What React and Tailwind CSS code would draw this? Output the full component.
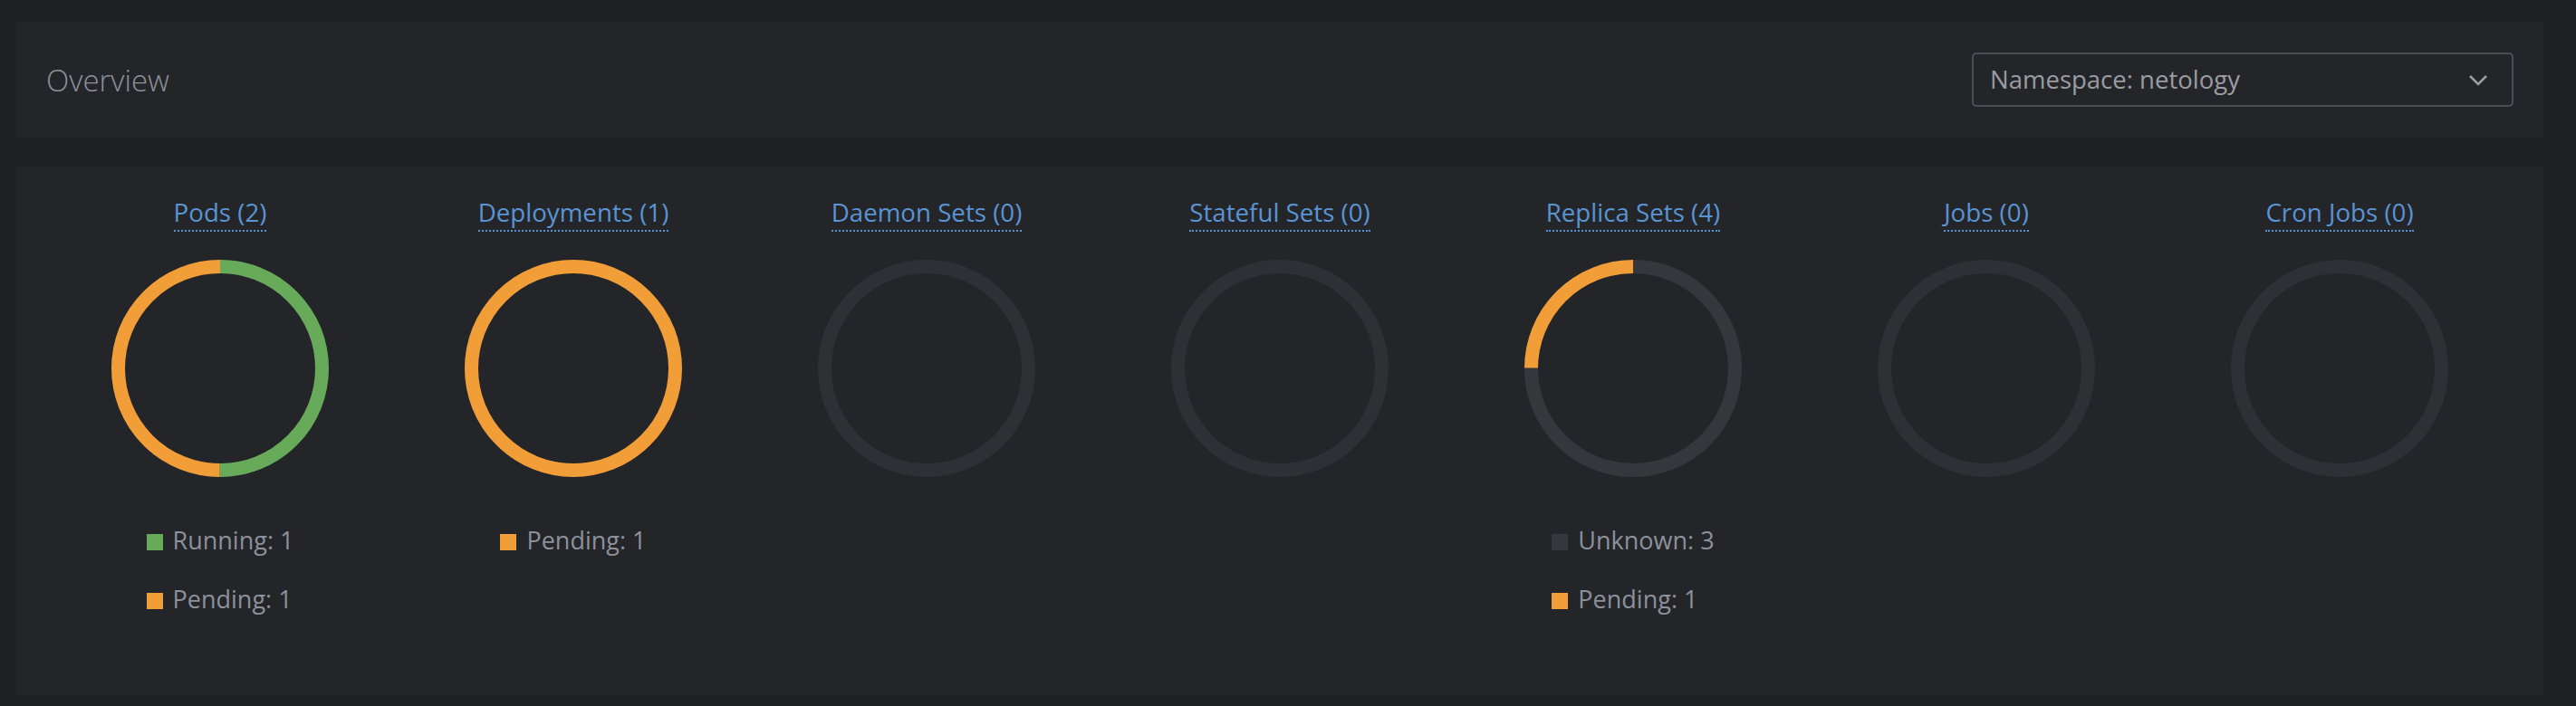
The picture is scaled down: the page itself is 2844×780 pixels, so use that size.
import React from 'react';

const COLORS = {
    running: '#66aa5a',
    pending: '#f29e38',
    unknown: '#36373c',
};

const workloads = [
    { name: 'Pods', count: 2, items: [{ label: 'Running', value: 1, key: 'running' }, { label: 'Pending', value: 1, key: 'pending' }] },
    { name: 'Deployments', count: 1, items: [{ label: 'Pending', value: 1, key: 'pending' }] },
    { name: 'Daemon Sets', count: 0, items: [] },
    { name: 'Stateful Sets', count: 0, items: [] },
    { name: 'Replica Sets', count: 4, items: [{ label: 'Unknown', value: 3, key: 'unknown' }, { label: 'Pending', value: 1, key: 'pending' }] },
    { name: 'Jobs', count: 0, items: [] },
    { name: 'Cron Jobs', count: 0, items: [] },
];

function Donut({ items }) {
    const r = 112.5;
    const c = 2 * Math.PI * r;
    const total = items.reduce((s, i) => s + i.value, 0);
    let offset = 0;

    return (
        <svg width="240" height="240" viewBox="0 0 240 240">
            <circle cx="120" cy="120" r={r} fill="none" stroke="#2e3035" strokeWidth="15" />
            {total > 0 &&
                items.map(item => {
                    const len = (item.value / total) * c;
                    const seg = (
                        <circle
                            key={item.key}
                            cx="120"
                            cy="120"
                            r={r}
                            fill="none"
                            stroke={COLORS[item.key]}
                            strokeWidth="15"
                            strokeDasharray={`${len} ${c - len}`}
                            strokeDashoffset={-offset}
                            transform="rotate(-90 120 120)"
                        />
                    );
                    offset += len;
                    return seg;
                })}
        </svg>
    );
}

export default function App() {
    return (
        <div className="min-h-[780px] bg-[#1f2024] pt-[24px] pb-[12px] pl-[18px] pr-[36px]" style={{ fontFamily: '"Open Sans", "Noto Sans", sans-serif' }}>
            {/* Header */}
            <div className="h-[128px] bg-[#242529] flex items-center justify-between pl-[33px] pr-[33px]">
                <h2 className="text-[33px] font-light text-[#8c919a] leading-none">Overview</h2>
                <div className="w-[598px] h-[60px] border-2 border-[#4c4f56] rounded-[5px] flex items-center justify-between pl-[18px] pr-[26px]">
                    <span className="text-[27.5px] text-[#9a9ca2]">Namespace: netology</span>
                    <svg width="22" height="13" viewBox="0 0 22 13">
                        <path d="M2 2 L11 11 L20 2" fill="none" stroke="#9a9ca2" strokeWidth="2.6" />
                    </svg>
                </div>
            </div>

            {/* Workload charts */}
            <div className="mt-[32px] bg-[#242529] px-[30px] pt-[31px] pb-[87px] grid grid-cols-7">
                {workloads.map(w => (
                    <div key={w.name} className="flex flex-col items-center">
                        <a className="text-[27.7px] leading-[39px] text-[#5a94d2] border-b-2 border-dotted border-[#5a94d2] cursor-pointer">
                            {w.name} ({w.count})
                        </a>
                        <div className="mt-[31px]">
                            <Donut items={w.items} />
                        </div>
                        <div className="mt-[52px] flex flex-col gap-[28px]">
                            {w.items.map(item => (
                                <div key={item.key} className="flex items-center gap-[11px] h-[37px] text-[27px] text-[#8c919a]">
                                    <span className="w-[18px] h-[18px] mt-[3px]" style={{ backgroundColor: COLORS[item.key] }}></span>
                                    <span>{item.label}: {item.value}</span>
                                </div>
                            ))}
                        </div>
                    </div>
                ))}
            </div>
        </div>
    );
}
